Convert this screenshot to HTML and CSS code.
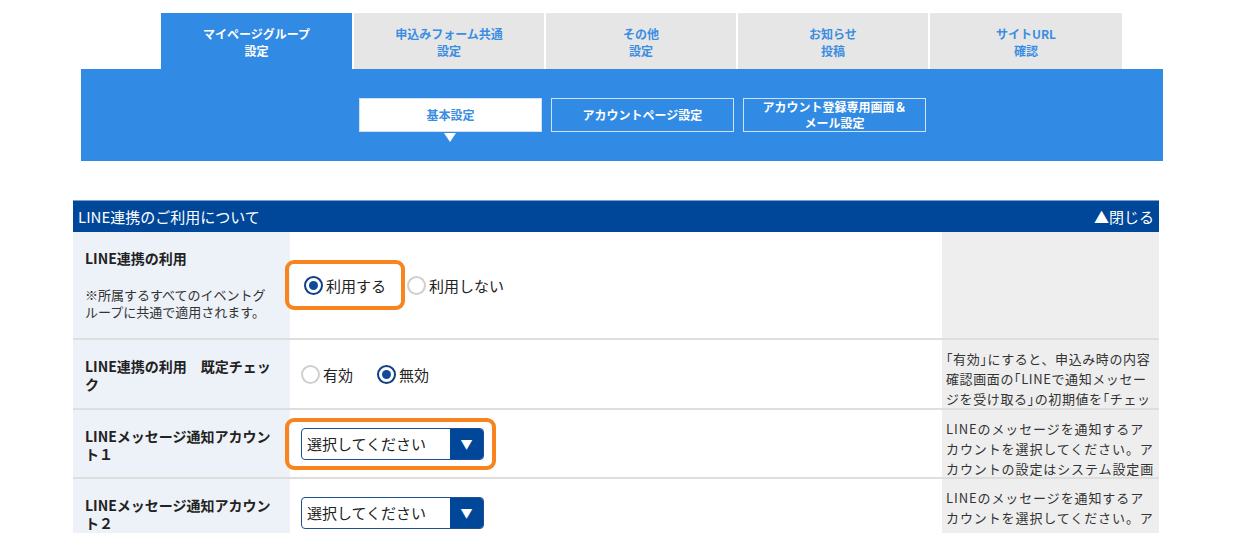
FILE: index.html
```html
<!DOCTYPE html>
<html lang="ja">
<head>
  <meta charset="UTF-8" />
  <title>LINE連携設定</title>
  <link rel="stylesheet" href="styles.css">
</head>
<body>

<!-- メインタブ -->
<nav class="nav">
  <ul class="tabs">
    <li class="tab active">マイページグループ<br>設定</li>
    <li class="tab">申込みフォーム共通<br>設定</li>
    <li class="tab">その他<br>設定</li>
    <li class="tab">お知らせ<br>投稿</li>
    <li class="tab">サイトURL<br>確認</li>
  </ul>
  <div class="subnav">
    <a class="subbtn current">基本設定</a>
    <a class="subbtn">アカウントページ設定</a>
    <a class="subbtn"><span>アカウント登録専用画面＆<br>メール設定</span></a>
  </div>
</nav>

<!-- LINE連携 -->
<section class="panel">
  <div class="panelHead">
    <span>LINE連携のご利用について</span>
    <span class="close">▲閉じる</span>
  </div>

  <div class="row row1">
    <div class="label">
      <strong>LINE連携の利用</strong>
      <p class="sub">※所属するすべてのイベントグループに共通で適用されます。</p>
    </div>
    <div class="field">
      <span class="mark markRadio"><span class="radio on"></span>利用する</span>
      <span class="radio"></span>利用しない
    </div>
    <div class="note"></div>
  </div>

  <div class="row row2">
    <div class="label"><strong>LINE連携の利用　既定チェック</strong></div>
    <div class="field">
      <span class="radio"></span>有効
      <span class="radio on gap"></span>無効
    </div>
    <div class="note"><p class="noteText nowrap"><span class="kk">「</span>有効<span class="kk">」</span>にすると、申込み時の内容<br>確認画面の<span class="kk">「</span>LINEで通知メッセー<br>ジを受け取る<span class="kk">」</span>の初期値を<span class="kk">「</span>チェッ</p></div>
  </div>

  <div class="row row3">
    <div class="label"><strong>LINEメッセージ通知アカウント１</strong></div>
    <div class="field">
      <span class="mark markSelect">
        <span class="select"><span class="selText">選択してください</span><span class="arrow">▼</span></span>
      </span>
    </div>
    <div class="note"><p class="noteText">LINEのメッセージを通知するアカウントを選択してください。アカウントの設定はシステム設定画</p></div>
  </div>

  <div class="row row4">
    <div class="label"><strong>LINEメッセージ通知アカウント２</strong></div>
    <div class="field">
      <span class="select"><span class="selText">選択してください</span><span class="arrow">▼</span></span>
    </div>
    <div class="note"><p class="noteText">LINEのメッセージを通知するアカウントを選択してください。ア</p></div>
  </div>
</section>

</body>
</html>
```

FILE: styles.css
```css
* { box-sizing: border-box; }

body {
  margin: 0;
  font-family: "Noto Sans CJK JP", "Noto Sans", sans-serif;
  color: #222;
  background: #fff;
  overflow: hidden;
}

/* ---- タブ ---- */
.nav {
  margin: 13px 0 0 81px;
  width: 1082px;
}

.tabs {
  list-style: none;
  margin: 0;
  padding: 0 0 0 80px;
  display: flex;
  gap: 2px;
}

.tab {
  width: 190px;
  height: 56px;
  background: #e6e6e6;
  color: #3a8de2;
  font-size: 12px;
  font-weight: bold;
  line-height: 17px;
  text-align: center;
  padding-top: 12px;
}

.tab:first-child { width: 191px; }
.tab:last-child { width: 192px; }

.tab.active {
  background: #318ae3;
  color: #fff;
}

.subnav {
  background: #318ae3;
  height: 92px;
  display: flex;
  gap: 9px;
  padding: 29px 0 0 278px;
}

.subbtn {
  position: relative;
  width: 183px;
  height: 34px;
  border: 1px solid #cfe3f8;
  color: #fff;
  font-size: 12px;
  font-weight: bold;
  line-height: 16px;
  display: flex;
  align-items: center;
  justify-content: center;
  text-align: center;
}

.subbtn.current {
  background: #fff;
  color: #3a8de2;
}

.subbtn.current::after {
  content: "";
  position: absolute;
  left: 84px;
  top: 34px;
  border-left: 6px solid transparent;
  border-right: 6px solid transparent;
  border-top: 9px solid #fff;
}

/* ---- パネル ---- */
.panel {
  margin: 39px 0 0 73px;
  width: 1086px;
}

.panelHead {
  background: #00479a;
  border-top: 1px solid #7c9cc9;
  color: #fff;
  height: 32px;
  padding: 0 5px;
  font-size: 15px;
  display: flex;
  align-items: center;
  justify-content: space-between;
}

.row {
  display: grid;
  grid-template-columns: 217px 652px 217px;
  border-bottom: 2px solid #dedede;
}

.row1 { height: 108px; }
.row2 { height: 70px; }
.row3 { height: 69px; }
.row4 { height: 70px; }

.label {
  background: #edf1f8;
  padding: 17px 12px 0 12px;
  font-size: 14px;
  line-height: 18px;
}

.label .sub {
  margin: 19px 0 0;
  font-size: 13px;
  line-height: 17px;
  color: #333;
}

.field {
  display: flex;
  align-items: center;
  padding-left: 11px;
  font-size: 15px;
  color: #222;
}

.note {
  background: #eeeeee;
  padding: 9px 4px 0 4px;
  overflow: hidden;
}

.noteText {
  margin: 0;
  font-size: 13px;
  line-height: 20px;
  letter-spacing: 0.9px;
  color: #333;
}

.noteText.nowrap {
  white-space: nowrap;
  letter-spacing: 0.6px;
}

.kk {
  font-feature-settings: "halt";
}

/* ---- ラジオ ---- */
.radio {
  width: 19px;
  height: 19px;
  border-radius: 50%;
  border: 2px solid #cfcfcf;
  background: #fff;
  margin-right: 3px;
  flex-shrink: 0;
  position: relative;
}

.radio.on {
  border-color: #0f3f84;
}

.radio.on::after {
  content: "";
  position: absolute;
  left: 3px;
  top: 3px;
  width: 9px;
  height: 9px;
  border-radius: 50%;
  background: #0f4b9a;
}

.radio.gap { margin-left: 24px; }

/* ---- 強調枠 ---- */
.mark {
  display: flex;
  align-items: center;
  border: 4px solid #f7841f;
  border-radius: 9px;
  margin-left: -16px;
}

.markRadio {
  width: 120px;
  height: 50px;
  padding-left: 15px;
  margin-right: 2px;
}

.markSelect {
  height: 52px;
  padding: 0 8px 0 12px;
}

/* ---- セレクト ---- */
.select {
  display: flex;
  width: 183px;
  height: 32px;
  border: 1px solid #1d4f94;
  border-radius: 4px;
  overflow: hidden;
  background: #fff;
}

.selText {
  flex: 1;
  padding-left: 5px;
  font-size: 15px;
  line-height: 30px;
}

.arrow {
  width: 33px;
  background: #00479a;
  color: #fff;
  font-size: 12px;
  text-align: center;
  line-height: 30px;
}
```
